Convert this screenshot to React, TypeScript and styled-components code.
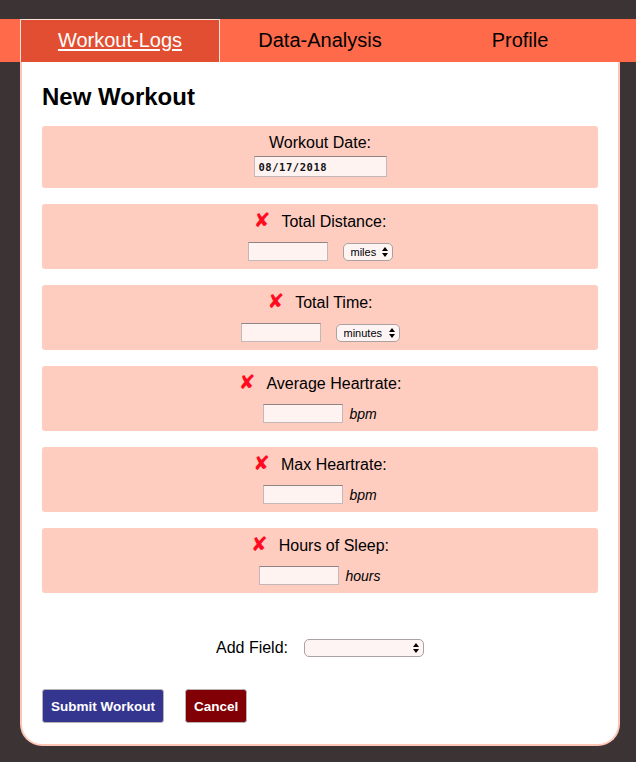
import React from "react";
import styled, { createGlobalStyle } from "styled-components";

const Global = createGlobalStyle`
  html, body { margin: 0; padding: 0; background: #3c3334; }
  body { font-family: "Liberation Sans", Arial, sans-serif; color: #000; }
  * { box-sizing: border-box; }
`;

const Page = styled.div`
  padding-top: 19px;
  padding-bottom: 18px;
`;

const Nav = styled.nav`
  display: flex;
  height: 43px;
  background: #ff6a4b;
  padding-left: 20px;
`;

const Tab = styled.a<{ $active?: boolean }>`
  width: 200px;
  display: flex;
  align-items: center;
  justify-content: center;
  padding-bottom: 2px;
  font-size: 20px;
  color: ${(p) => (p.$active ? "#fff" : "#000")};
  text-decoration: ${(p) => (p.$active ? "underline" : "none")};
  text-underline-offset: 2px;
  background: ${(p) => (p.$active ? "#e14e31" : "transparent")};
  border: ${(p) => (p.$active ? "1px solid #fbe2dc" : "1px solid transparent")};
  border-bottom: none;
`;

const Card = styled.main`
  width: 600px;
  margin-left: 20px;
  background: #fff;
  border: 2px solid #ffc6b8;
  border-top: none;
  border-radius: 0 0 22px 22px;
  padding: 21px 20px 21px;
`;

const Heading = styled.h1`
  margin: 0 0 15px;
  font-size: 24px;
  line-height: 28px;
  font-weight: bold;
`;

const Fields = styled.div`
  display: flex;
  flex-direction: column;
  gap: 16px;
`;

const FieldBox = styled.section<{ $tight?: boolean }>`
  background: #fecdc0;
  border-radius: 3px;
  padding: ${(p) => (p.$tight ? "7px 0 11px" : "8px 0 8px")};
  display: flex;
  flex-direction: column;
  align-items: center;
  gap: ${(p) => (p.$tight ? "3px" : "10px")};
`;

const LabelRow = styled.div`
  display: flex;
  align-items: center;
  gap: 11px;
  font-size: 16px;
  line-height: 20px;
`;

const Cross = styled.span`
  font-family: "DejaVu Sans", sans-serif;
  color: #ff0a1e;
  font-size: 20px;
  line-height: 20px;
  font-weight: bold;
  position: relative;
  top: -2px;
`;

const ControlRow = styled.div<{ $gap: number }>`
  display: flex;
  align-items: center;
  gap: ${(p) => p.$gap}px;
  height: 19px;
`;

const TextInput = styled.input`
  width: 80px;
  height: 19px;
  background: #fff3f2;
  border: 1px solid #c2b8b7;
  border-top-color: #8d8383;
  padding: 0 3px;
  font: 12px "Liberation Sans", sans-serif;
  outline: none;
`;

const DateInput = styled.input`
  width: 133px;
  height: 21px;
  background: #fff3f2;
  border: 1px solid #c2b8b7;
  border-top-color: #8d8383;
  padding: 0 4px;
  font: bold 10.5px "DejaVu Sans Mono", monospace;
  letter-spacing: 0.55px;
  color: #111;
  outline: none;
`;

const SelectWrap = styled.span`
  position: relative;
  display: inline-flex;
`;

const Select = styled.select<{ $w: number }>`
  appearance: none;
  -webkit-appearance: none;
  width: ${(p) => p.$w}px;
  height: 18px;
  background: #fff4f4;
  border: 1px solid #aaa1a1;
  border-radius: 5px;
  padding: 0 14px 0 7px;
  font: 11px "Liberation Sans", sans-serif;
  color: #000;
  outline: none;
`;

const Arrows = styled.svg`
  position: absolute;
  right: 5px;
  top: 4px;
  pointer-events: none;
`;

const Unit = styled.span`
  font-size: 14px;
  font-style: italic;
`;

const AddRow = styled.div`
  margin-top: 45px;
  display: flex;
  justify-content: center;
  align-items: center;
  gap: 16px;
  font-size: 16px;
  height: 20px;
`;

const Buttons = styled.div`
  margin-top: 31px;
  display: flex;
  gap: 21px;
`;

const Button = styled.button<{ $bg: string }>`
  height: 34px;
  padding: 0 8px;
  background: ${(p) => p.$bg};
  color: #fff;
  font: bold 13.5px "Liberation Sans", sans-serif;
  border: 1px solid #b9b2b5;
  border-radius: 3px;
`;

const Dropdown = ({ value, width }: { value: string; width: number }) => (
  <SelectWrap>
    <Select $w={width} value={value} onChange={() => {}}>
      <option value={value}>{value}</option>
    </Select>
    <Arrows width="6" height="10" viewBox="0 0 6 10">
      <polygon points="0,4 3,0 6,4" fill="#000" />
      <polygon points="0,6 6,6 3,10" fill="#000" />
    </Arrows>
  </SelectWrap>
);

type Field = {
  label: string;
  kind: "select" | "unit";
  extra: string;
  width?: number;
  gap: number;
};

const fields: Field[] = [
  { label: "Total Distance:", kind: "select", extra: "miles", width: 50, gap: 15 },
  { label: "Total Time:", kind: "select", extra: "minutes", width: 64, gap: 15 },
  { label: "Average Heartrate:", kind: "unit", extra: "bpm", gap: 6 },
  { label: "Max Heartrate:", kind: "unit", extra: "bpm", gap: 6 },
  { label: "Hours of Sleep:", kind: "unit", extra: "hours", gap: 6 },
];

export default function App() {
  return (
    <>
      <Global />
      <Page>
        <Nav>
          <Tab $active href="#">Workout-Logs</Tab>
          <Tab>Data-Analysis</Tab>
          <Tab>Profile</Tab>
        </Nav>
        <Card>
          <Heading>New Workout</Heading>
          <Fields>
            <FieldBox $tight>
              <LabelRow>Workout Date:</LabelRow>
              <DateInput readOnly value="08/17/2018" />
            </FieldBox>
            {fields.map((f) => (
              <FieldBox key={f.label}>
                <LabelRow>
                  <Cross>✘</Cross>
                  <span>{f.label}</span>
                </LabelRow>
                <ControlRow $gap={f.gap}>
                  <TextInput />
                  {f.kind === "select" ? (
                    <Dropdown value={f.extra} width={f.width ?? 50} />
                  ) : (
                    <Unit>{f.extra}</Unit>
                  )}
                </ControlRow>
              </FieldBox>
            ))}
          </Fields>
          <AddRow>
            <span>Add Field:</span>
            <Dropdown value="" width={120} />
          </AddRow>
          <Buttons>
            <Button $bg="#33358f">Submit Workout</Button>
            <Button $bg="#800006">Cancel</Button>
          </Buttons>
        </Card>
      </Page>
    </>
  );
}
